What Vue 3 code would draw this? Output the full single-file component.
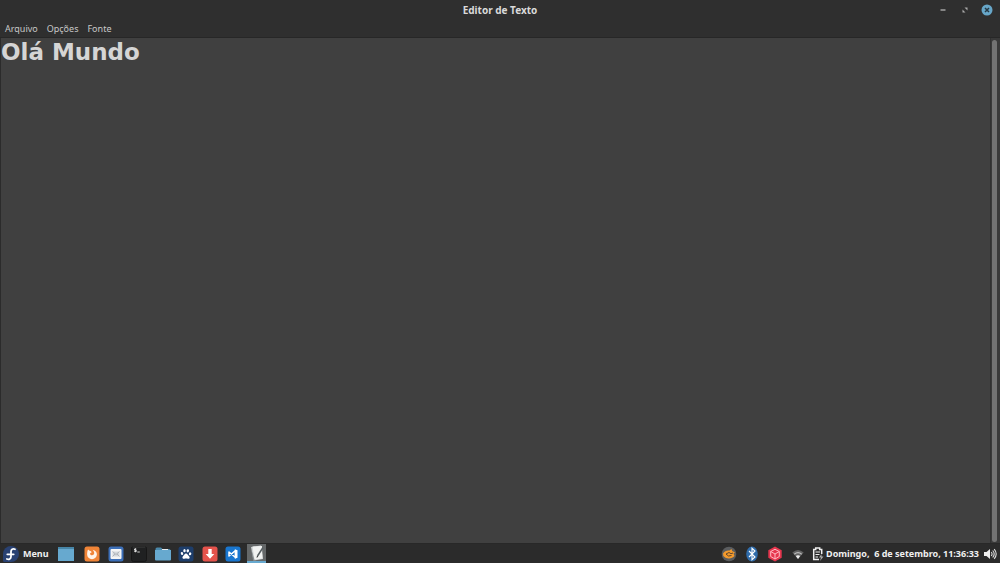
<script setup>
import { ref } from 'vue'

const text = ref('Olá Mundo')
const menus = ['Arquivo', 'Opções', 'Fonte']
</script>

<template>
  <div class="screen">
    <header class="titlebar">
      <h1>Editor de Texto</h1>
      <div class="controls">
        <button aria-label="Minimizar"><svg viewBox="0 0 12 12"><path d="M3.5 6h5" stroke="#b5b5b5" stroke-width="1.3" /></svg></button>
        <button aria-label="Restaurar"><svg viewBox="0 0 12 12"><path d="M5.500 3.500h3v3zM3.500 5.500v3h3z" fill="#aaa" /></svg></button>
        <button aria-label="Fechar"><svg viewBox="0 0 12 12"><circle cx="6" cy="6" r="5.5" fill="#67a6c8" /><path d="m4 4 4 4m0-4L4 8" stroke="#263944" stroke-width="1.500" /></svg></button>
      </div>
    </header>

    <nav class="menubar" aria-label="Menu do editor">
      <button v-for="m in menus" :key="m">{{ m }}</button>
    </nav>

    <main class="editor">
      <textarea v-model="text" aria-label="Texto" spellcheck="false"></textarea>
      <div class="track"><div class="thumb"></div></div>
    </main>

    <footer class="panel">
      <button class="start">
        <svg viewBox="0 0 18 18"><path d="M9 1a8 8 0 1 1 0 16H2.5A1.5 1.5 0 0 1 1 15.500V9a8 8 0 0 1 8-8z" fill="#294172" /><path d="M13 4.200c-2.200-1.100-4 .2-4 2.400v4.900c0 2.300-2 3.500-4.100 2.500M5.300 9.300h6.400" fill="none" stroke="#fff" stroke-width="1.800" stroke-linecap="round" /></svg>
        <span>Menu</span>
      </button>
      <button class="desktop" aria-label="Mostrar área de trabalho">
        <svg viewBox="0 0 16 16"><path d="M0 1h16v14H0z" fill="#67a9cf" /><path d="M0 1h16v2H0z" fill="#4786a8" /></svg>
      </button>

      <nav class="launchers" aria-label="Aplicativos">
        <button aria-label="Firefox"><svg viewBox="0 0 16 16"><rect x=".5" y=".5" width="15" height="15" rx="2.5" fill="#f08437" /><path d="M3.4 5.200 4 3.500l1.600 1.300c1.200.1 1.900.8 2 1.700-1 .2-1.700.7-1.500 1.600.4 1.500 2.800 1.700 3.800.2.800-1.300.2-2.800-1.200-4.600 2.700.7 4.200 2.400 4.200 4.600a4.900 4.900 0 0 1-9.800-.1c0-1.100.2-2 .3-3z" fill="#fff3e8" /></svg></button>
        <button aria-label="E-mail"><svg viewBox="0 0 16 16"><rect x=".5" y=".5" width="15" height="15" rx="2.5" fill="#3c6fb8" /><rect x="2.500" y="3" width="11" height="10" rx="1" fill="#f5f5f5" /><path d="M4.500 5.500h7v5h-7z" fill="#d5d9dd" /><path d="m4.500 5.500 3.500 3 3.500-3M4.500 10.500 7 8m4.500 2.500L9 8" fill="none" stroke="#a1a5aa" stroke-width=".7" /></svg></button>
        <button aria-label="Terminal"><svg viewBox="0 0 16 16"><rect x=".5" y=".5" width="15" height="15" rx="2" fill="#202122" stroke="#171717" /><path d="M1.500 1h13" stroke="#555" stroke-width=".6" /><path d="M5.300 3H3.500v1.200h1.800v1.300H3.300M4.400 2.300v4M6.300 6h2.500" fill="none" stroke="#e4e4e4" stroke-width=".9" /></svg></button>
        <button aria-label="Arquivos"><svg viewBox="0 0 16 16"><path d="M.5 3q0-1.500 1.500-1.500h4l1.500 1.500H14q1.500 0 1.500 1.500V8H.5z" fill="#4a88aa" /><path d="M7 3h6v2H7z" fill="#e8edf0" /><path d="M0 4h6.500L7.500 4H16v9.500q0 1-1 1H1q-1 0-1-1z" fill="#67a9cf" /></svg></button>
        <button aria-label="Baidu"><svg viewBox="0 0 16 16"><rect x=".5" y=".5" width="15" height="15" rx="2.500" fill="#1e3e6b" /><g fill="#fff"><ellipse cx="4" cy="7.500" rx="1.200" ry="1.600" transform="rotate(-15 4 7.500)" /><ellipse cx="6.500" cy="4.700" rx="1.200" ry="1.600" /><ellipse cx="9.800" cy="4.800" rx="1.200" ry="1.600" transform="rotate(10 9.800 4.800)" /><ellipse cx="12.100" cy="7.800" rx="1.200" ry="1.500" transform="rotate(20 12.100 7.800)" /><path d="M8 7.400c1.600 0 1.700 1.500 2.900 2.500 1.500 1.300.6 3.200-1 2.900-1.300-.3-2.200-.3-3.500 0-1.800.3-2.700-1.600-1.300-2.900C6.300 8.900 6.500 7.400 8 7.400z" /></g></svg></button>
        <button aria-label="Downloads"><svg viewBox="0 0 16 16"><rect x=".5" y=".5" width="15" height="15" rx="2.500" fill="#e4534c" /><path d="M6.300 3h3.400v5h2.600L8 12.800 3.700 8h2.600z" fill="#fff" /></svg></button>
        <button aria-label="Visual Studio Code"><svg viewBox="0 0 16 16"><rect x=".5" y=".5" width="15" height="15" rx="2.500" fill="#1976cf" /><path d="M10.500 4.500 4 10V6l6.500 5.500z" fill="none" stroke="#fff" stroke-width="1.500" stroke-linejoin="round" /><path d="m9.800 3.200 2.700 1v7.600l-2.700 1z" fill="#fff" /></svg></button>
        <button class="active" aria-label="Editor de Texto"><svg viewBox="0 0 16 16"><path d="m2 2 10-1.500L14 14 4.500 15.500z" fill="#cfd3d4" /><path d="M3.500 1.500 13 1l.5 12.500-8 1z" fill="#f1f2f1" /><path d="m2 3 3.500 12L4 15z" fill="#888e91" /><path d="M14 2.500 8.500 11" stroke="#555d60" stroke-width="1.500" /><path d="m8.500 11-.5 1.500" stroke="#222" /></svg></button>
      </nav>

      <div class="tray">
        <button aria-label="Atualizações"><svg viewBox="0 0 16 16"><circle cx="8" cy="8" r="7.300" fill="#5b5d5f" /><path d="M2 7.500c1.500-2.500 4-3.500 6.500-3l2-1.500.7 2 2.800 1.500-1.500 1 1 2.500c-2 2.500-5.700 3-9 1.800L2.300 10z" fill="#f39a2d" /><path d="m5 8 3-1.500 2 1.200 2-.7M5 8l2.500 2 3-.5" fill="none" stroke="#51402c" stroke-width=".9" /></svg></button>
        <button aria-label="Bluetooth"><svg viewBox="0 0 16 16"><ellipse cx="8" cy="8" rx="5.800" ry="7.500" fill="#2f6cab" /><path d="m5 5 6 6-3 2.700V2.300L11 5l-6 6" fill="none" stroke="#fff" stroke-width="1.100" /></svg></button>
        <button aria-label="Pacotes"><svg viewBox="0 0 16 16"><path d="m8 .5 6.700 3.700v7.600L8 15.500l-6.700-3.700V4.200z" fill="#e6364e" /><path d="m8 3.300 4.300 2.200v5L8 13l-4.300-2.500v-5zm-4.300 2.200L8 8l4.300-2.500M8 8v5" fill="none" stroke="#ffb9c1" stroke-width="1" /></svg></button>
        <button aria-label="Rede sem fio"><svg viewBox="0 0 16 16"><path d="M2.300 6.500Q8 1.500 13.700 6.500L8 13z" fill="#626262" /><path d="M4.300 8.200q3.700-3 7.400 0" fill="none" stroke="#bbb" stroke-width="1.300" /><path d="M5.800 10Q8 8.300 10.200 10L8 13z" fill="#eee" /></svg></button>
        <button class="battery" aria-label="Bateria"><svg viewBox="0 0 16 16"><path d="M9 13.500H3.700v-10h2V2h4v1.500h2V8" fill="none" stroke="#eee" stroke-width="1.500" /><path d="M5.500 6h4.500M5.500 8.500h4M5.500 11H8" stroke="#eee" stroke-width="1.200" /><path d="m11.500 8-2.500 3.500h2L10 15l3.500-4.500h-2z" fill="#aaa" /></svg></button>
      </div>
      <time>Domingo,&nbsp; 6 de setembro, 11:36:33</time>
      <button class="volume" aria-label="Volume"><svg viewBox="0 0 14 14"><path d="M1 5h2.500L7 2v10L3.500 9H1z" fill="#f0f0f0" /><path d="M8.300 5q1.500 2 0 4M9.700 3.500q3 3.500 0 7M11.200 2.200q4 4.800 0 9.600" fill="none" stroke="#ddd" stroke-width="1.100" /></svg></button>
    </footer>
  </div>
</template>

<style>
body { margin: 0; background: #2f2f2f; }
</style>

<style scoped>
.screen {
  display: flex;
  flex-direction: column;
  height: 100vh;
  overflow: hidden;
  background: #2f2f2f;
  color: #dadada;
  font-family: "Noto Sans", sans-serif;
}
button {
  display: flex;
  align-items: center;
  justify-content: center;
  padding: 0;
  border: 0;
  background: none;
  color: inherit;
  font: inherit;
}
svg { display: block; flex: none; width: 16px; height: 16px; }
.titlebar {
  display: grid;
  grid-template-columns: 1fr auto 1fr;
  align-items: center;
  height: 20px;
}
h1 { grid-column: 2; margin: 0; font-size: 10px; line-height: 20px; font-weight: 700; }
.controls { display: flex; justify-content: flex-end; gap: 10px; padding-right: 7px; }
.controls svg { width: 12px; height: 12px; }
.menubar {
  display: flex;
  gap: 9px;
  height: 17px;
  padding: 0 5px;
  border-bottom: 1px solid #272727;
  color: #c8c8c8;
  font-size: 9px;
  line-height: 16px;
}
.editor { display: flex; flex: 1; min-height: 0; border-left: 1px solid #2b2b2b; background: #404040; }
textarea {
  flex: 1;
  min-width: 0;
  padding: 0;
  border: 0;
  outline: 0;
  resize: none;
  background: none;
  color: #d5d5d5;
  font: 700 23px/29px "DejaVu Sans", sans-serif;
}
.track { display: flex; box-sizing: border-box; width: 10px; padding: 2px 3px 1px 1px; border-left: 1px solid #303030; background: #393939; }
.thumb { flex: 1; border-radius: 3px; background: #727272; }
.panel {
  display: flex;
  align-items: center;
  box-sizing: border-box;
  height: 20px;
  background: #2b2b2b;
  border-top: 1px solid #282828;
  font-size: 9px;
  font-weight: 700;
  line-height: 20px;
  color: #f0f0f0;
}
.start { gap: 3px; padding-left: 2px; }
.start svg { width: 18px; height: 18px; }
.desktop { margin-left: 9px; }
.launchers { display: grid; grid-template-columns: repeat(8, 1fr); width: 188px; margin-left: 7px; align-self: stretch; }
.active { justify-self: center; width: 19px; box-sizing: border-box; border-bottom: 2px solid #67a9cf; background: #656869; }
.tray { display: flex; gap: 7px; margin-left: auto; }
.battery { width: 10px; }
time { margin-left: 3px; white-space: nowrap; }
.volume { margin: 0 3px 0 4px; }
.volume svg { width: 14px; height: 14px; }
</style>
